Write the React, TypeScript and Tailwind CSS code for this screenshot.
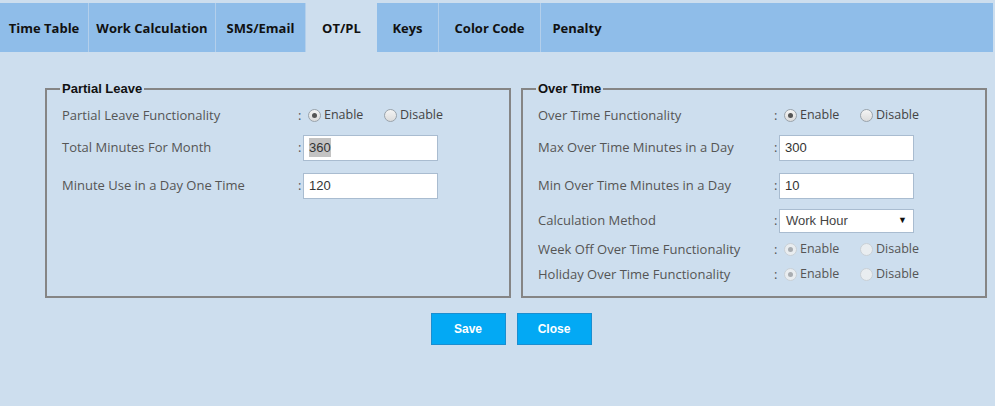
import React from 'react';

const tabs = [
  { label: 'Time Table', w: 'w-[89px]' },
  { label: 'Work Calculation', w: 'w-[127px]' },
  { label: 'SMS/Email', w: 'w-[90px]' },
  { label: 'OT/PL', w: 'w-[71px]', active: true },
  { label: 'Keys', w: 'w-[62px]' },
  { label: 'Color Code', w: 'w-[102px]' },
  { label: 'Penalty', w: 'w-[72px]', last: true },
];

const Radio = ({ checked, disabled }: { checked?: boolean; disabled?: boolean }) => (
  <span
    className={`inline-flex items-center justify-center w-[13px] h-[13px] rounded-full border ${
      disabled ? 'border-[#c9d0d6] bg-[#e9edf0]' : 'border-[#9aa3ab] bg-gradient-to-b from-[#f4f4f4] to-[#dcdcdc]'
    }`}
  >
    {checked && (
      <span className={`w-[5px] h-[5px] rounded-full ${disabled ? 'bg-[#a9adb1]' : 'bg-[#555]'}`} />
    )}
  </span>
);

const RadioPair = ({ disabled }: { disabled?: boolean }) => (
  <div className={`flex items-center ml-[5px] text-[12.5px] ${disabled ? 'text-[#555]' : 'text-[#444]'}`}>
    <Radio checked disabled={disabled} />
    <span className="ml-[3px] w-[60px]">Enable</span>
    <Radio disabled={disabled} />
    <span className="ml-[3px]">Disable</span>
  </div>
);

const Row = ({ label, children, className = '' }: { label: string; children: React.ReactNode; className?: string }) => (
  <div className={`flex items-center ${className}`}>
    <div className="w-[236px] text-[#555] text-[13px]">{label}</div>
    <div className="w-[5px] text-[#555] text-[13px]">:</div>
    {children}
  </div>
);

const TextBox = ({ value, selected }: { value: string; selected?: boolean }) => (
  <div className="w-[135px] h-[26px] bg-white border border-[#a9bcd0] flex items-center pl-[5px] text-[13px] text-[#333] font-['Liberation_Sans',sans-serif]">
    <span className={selected ? 'bg-[#c3c3c3]' : ''}>{value}</span>
  </div>
);

export default function App() {
  return (
    <div className="w-[995px] h-[406px] bg-[#cddeee] font-['Open_Sans',sans-serif] text-[12px]">
      <div className="pt-[3px]">
        <div className="flex h-[49px] bg-[#8fbde9] mr-[2px]">
          {tabs.map(t => (
            <div
              key={t.label}
              className={`${t.w} flex items-center justify-center pt-[3px] font-bold text-[13px] text-[#111] ${
                t.active ? 'bg-[#cddeee]' : t.last ? '' : 'border-r border-[#b3cfeb]'
              }`}
            >
              {t.label}
            </div>
          ))}
        </div>
      </div>

      <div className="flex gap-[10px] pl-[45px] mt-[27px]">
        <fieldset className="w-[466px] h-[219px] border-2 border-[#858585] px-[15px] pt-[6px]">
          <legend className="-ml-[2px] px-[2px] font-['Liberation_Sans',sans-serif] font-bold text-[13px] text-[#111]">
            Partial Leave
          </legend>
          <Row label="Partial Leave Functionality" className="h-[22px]">
            <RadioPair />
          </Row>
          <Row label="Total Minutes For Month" className="mt-[8px]">
            <TextBox value="360" selected />
          </Row>
          <Row label="Minute Use in a Day One Time" className="mt-[12px]">
            <TextBox value="120" />
          </Row>
        </fieldset>

        <fieldset className="w-[466px] h-[219px] border-2 border-[#858585] px-[15px] pt-[6px]">
          <legend className="-ml-[2px] px-[2px] font-['Liberation_Sans',sans-serif] font-bold text-[13px] text-[#111]">
            Over Time
          </legend>
          <Row label="Over Time Functionality" className="h-[22px]">
            <RadioPair />
          </Row>
          <Row label="Max Over Time Minutes in a Day" className="mt-[8px]">
            <TextBox value="300" />
          </Row>
          <Row label="Min Over Time Minutes in a Day" className="mt-[12px]">
            <TextBox value="10" />
          </Row>
          <Row label="Calculation Method" className="mt-[10px]">
            <div className="w-[135px] h-[24px] bg-white border border-[#a9bcd0] flex items-center justify-between pl-[6px] pr-[6px] text-[13px] text-[#444] font-['Liberation_Sans',sans-serif]">
              <span>Work Hour</span>
              <span className="text-[9px] text-[#111]">▼</span>
            </div>
          </Row>
          <Row label="Week Off Over Time Functionality" className="mt-[7px] h-[20px]">
            <RadioPair disabled />
          </Row>
          <Row label="Holiday Over Time Functionality" className="mt-[5px] h-[20px]">
            <RadioPair disabled />
          </Row>
        </fieldset>
      </div>

      <div className="flex justify-center gap-[11px] mt-[15px] pl-[27px]">
        <button className="w-[75px] h-[32px] bg-[#03a9f4] border border-[#1b8ed0] text-white font-bold text-[12px] font-['Liberation_Sans',sans-serif]">
          Save
        </button>
        <button className="w-[75px] h-[32px] bg-[#03a9f4] border border-[#1b8ed0] text-white font-bold text-[12px] font-['Liberation_Sans',sans-serif]">
          Close
        </button>
      </div>
    </div>
  );
}
